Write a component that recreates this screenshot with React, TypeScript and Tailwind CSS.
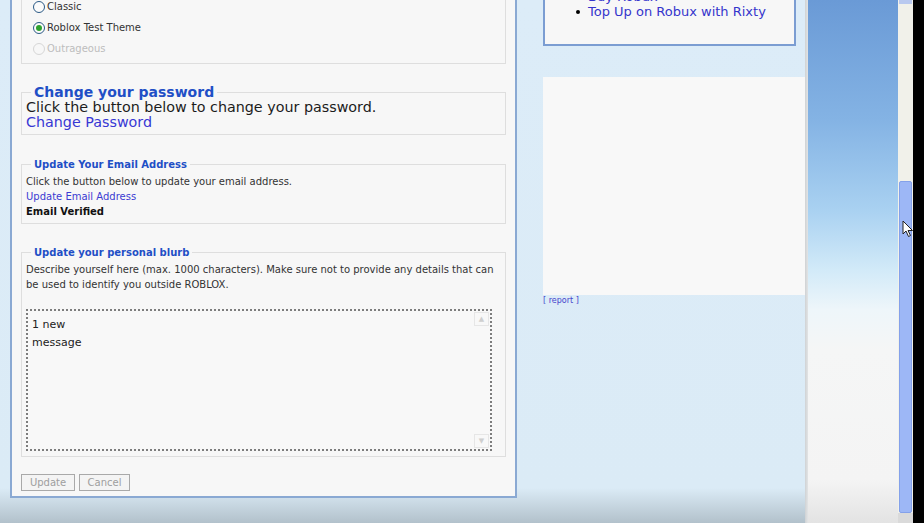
import clsx from "clsx";

const THEMES = [
  { label: "Classic", checked: false, disabled: false },
  { label: "Roblox Test Theme", checked: true, disabled: false },
  { label: "Outrageous", checked: false, disabled: true },
];

const SHOP_LINKS = ["Buy Robux", "Top Up on Robux with Rixty"];

function Radio({ label, checked, disabled }: { label: string; checked: boolean; disabled: boolean }) {
  return (
    <div className="flex h-[21px] items-center">
      <span
        className={clsx(
          "ml-[7px] flex h-[12px] w-[12px] items-center justify-center rounded-full border",
          disabled ? "border-[#d6d6d6] bg-[#f7f7f7]" : "border-[#2b5a86] bg-[#fbfbfb]"
        )}
      >
        {checked && <span className="h-[6px] w-[6px] rounded-full bg-[#2fa32f]" />}
      </span>
      <span className={clsx("ml-[2px] text-[10px]", disabled ? "text-[#bdbdbd]" : "text-[#333]")}>
        {label}
      </span>
    </div>
  );
}

function SettingsPanel() {
  return (
    <div className="ml-[10px] w-[507px] shrink-0 self-start border-x-2 border-b-2 border-[#8aa9d3] bg-[#f7f7f7] px-[9px] pb-[5px]">
      {/* theme picker */}
      <fieldset className="mt-[-4px] border-x border-b border-[#dedede] px-[4px] pb-[4px]">
        {THEMES.map((t) => (
          <Radio key={t.label} {...t} />
        ))}
      </fieldset>

      <fieldset className="mt-[20px] border border-[#dedede] px-[4px] pb-[4px]">
        <legend className="ml-[5px] px-[3px] text-[14px] leading-[16px] font-bold text-[#1f4fc6]">
          Change your password
        </legend>
        <div className="text-[14.3px] leading-[15px] text-[#1c1c1c]">
          Click the button below to change your password.
        </div>
        <a className="block text-[14.3px] leading-[15px] text-[#3838d4]">Change Password</a>
      </fieldset>

      <fieldset className="mt-[23px] border border-[#dedede] px-[4px] pb-[4px]">
        <legend className="ml-[5px] px-[3px] text-[10px] leading-[13px] font-bold text-[#1f4fc6]">
          Update Your Email Address
        </legend>
        <div className="pt-[3px] text-[10px] leading-[15px] text-[#333]">
          <div>Click the button below to update your email address.</div>
          <a className="block text-[#3b3bd2]">Update Email Address</a>
          <div className="font-bold text-[#111]">Email Verified</div>
        </div>
      </fieldset>

      <fieldset className="mt-[22px] border border-[#dedede] px-[4px] pb-[5px]">
        <legend className="ml-[5px] px-[3px] text-[10px] leading-[13px] font-bold text-[#1f4fc6]">
          Update your personal blurb
        </legend>
        <p className="pt-[3px] text-[10px] leading-[15px] text-[#333]">
          Describe yourself here (max. 1000 characters). Make sure not to provide any details that can
          <br />
          be used to identify you outside ROBLOX.
        </p>
        <div className="mt-[17px] flex h-[142px] w-[466px] border-2 border-dotted border-[#7d7d7d] bg-[#f8f8f8]">
          <div className="flex-1 pl-[4px] pt-[5px] text-[11px] leading-[18px] text-[#222]">
            1 new
            <br />
            message
          </div>
          <div className="flex w-[16px] flex-col justify-between py-[1px] pr-[1px]">
            <span className="flex h-[14px] items-center justify-center border border-[#e6e6e6] text-[7px] text-[#cfcfcf]">
              ▲
            </span>
            <span className="flex h-[14px] items-center justify-center border border-[#e6e6e6] text-[7px] text-[#cfcfcf]">
              ▼
            </span>
          </div>
        </div>
      </fieldset>

      <div className="mt-[17px] flex gap-[4px]">
        <button className="h-[17px] w-[54px] border border-[#a9a9a9] bg-[#f4f4f4] text-[10px] text-[#9e9e9e]">
          Update
        </button>
        <button className="h-[17px] w-[51px] border border-[#a9a9a9] bg-[#f4f4f4] text-[10px] text-[#9e9e9e]">
          Cancel
        </button>
      </div>
    </div>
  );
}

function SideColumn() {
  return (
    <div className="ml-[26px] flex w-[262px] shrink-0 flex-col">
      <div className="w-[253px] border-x-2 border-b-2 border-[#7b9dd2] bg-[#f7f7f7] pb-[25px]">
        <ul className="mt-[-11px]">
          {SHOP_LINKS.map((l) => (
            <li key={l} className="flex h-[15px] items-center pl-[31px] text-[13px] leading-[15px]">
              <span className="mr-[8px] h-[4px] w-[4px] rounded-full bg-black" />
              <a className="text-[#3535cc]">{l}</a>
            </li>
          ))}
        </ul>
      </div>
      {/* ad slot */}
      <div className="mt-[31px] h-[218px] w-[262px] bg-[#f8f8f8]" />
      <a className="mt-[1px] text-[8px] leading-[10px] text-[#4646cc]">[ report ]</a>
    </div>
  );
}

function Cursor() {
  return (
    <svg className="absolute left-[902px] top-[220px]" width="12" height="18" viewBox="0 0 12 18">
      <path d="M1 1 L1 14 L4 11 L6.5 16.5 L8.5 15.5 L6 10.5 L10.5 10.5 Z" fill="#fff" stroke="#222" strokeWidth="1" strokeLinejoin="round" />
    </svg>
  );
}

export default function App() {
  return (
    <div className="relative flex h-[523px] w-[924px] overflow-hidden bg-black font-['DejaVu_Sans',Verdana,sans-serif]">
      <div className="flex w-[805px] shrink-0 bg-[linear-gradient(to_bottom,#dcecf8_0px,#dbebf6_488px,#b2c1cb_523px)]">
        <SettingsPanel />
        <SideColumn />
      </div>
      <div className="w-[3px] shrink-0 bg-[linear-gradient(to_right,#cfd2d4,#e2e4e5)]" />
      {/* desktop wallpaper strip */}
      <div className="w-[90px] shrink-0 bg-[linear-gradient(to_bottom,#6a9ad6_0px,#84b3e4_120px,#a9d1f1_210px,#d2eaf8_270px,#eef6fa_310px,#f5f6f6_350px,#f4f4f4_480px,#e3e3e3_523px)]" />
      {/* window scrollbar */}
      <div className="flex w-[15px] shrink-0 flex-col bg-[#f1f1ea]">
        <div className="mx-[1px] h-[4px] bg-[#b9c9ef]" />
        <div className="mx-[1px] mt-[177px] h-[332px] rounded-[2px] border border-[#84a1ea] bg-[#9db7f6]" />
        <div className="flex-1 bg-[#dadada]" />
      </div>
      <div className="w-[11px] shrink-0 bg-black" />
      <Cursor />
    </div>
  );
}
